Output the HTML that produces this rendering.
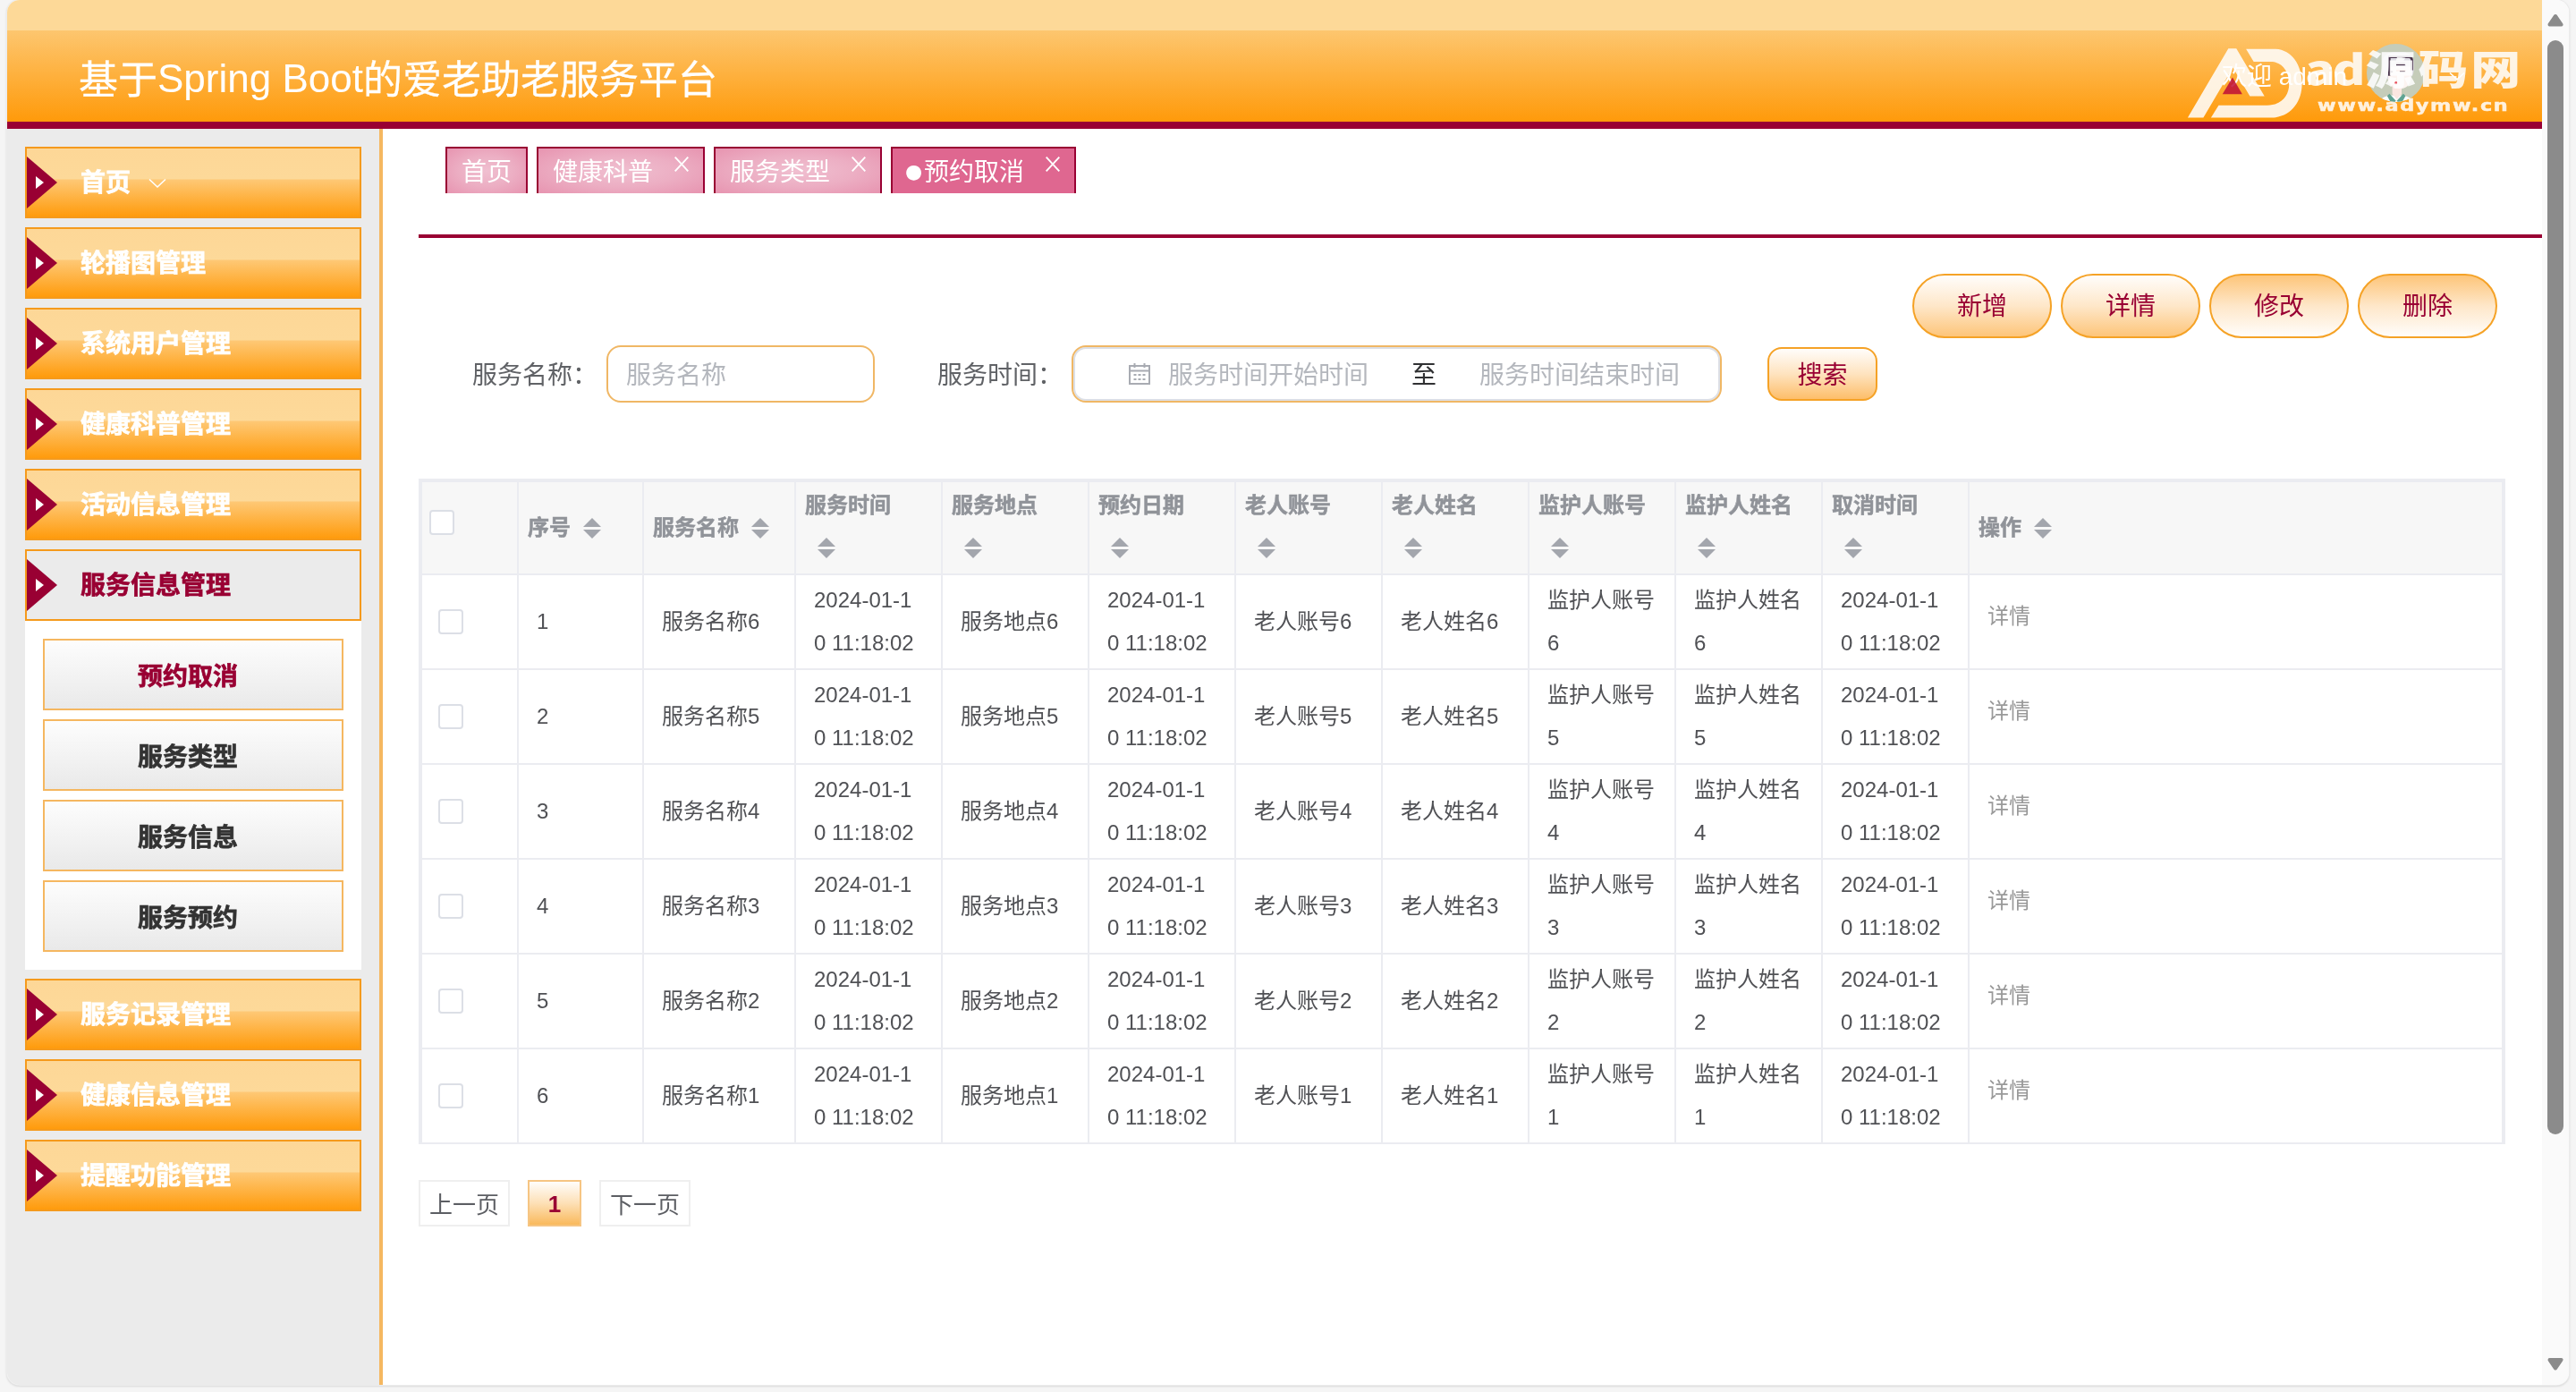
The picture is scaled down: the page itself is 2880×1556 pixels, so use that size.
<!DOCTYPE html>
<html lang="zh-CN">
<head>
<meta charset="utf-8">
<title>基于Spring Boot的爱老助老服务平台</title>
<style>
*{box-sizing:border-box;margin:0;padding:0}
html,body{width:2880px;height:1556px;overflow:hidden;background:#f5f5f5}
body{font-family:"Liberation Sans","Noto Sans CJK SC",sans-serif;color:#333;position:relative}
#win{will-change:transform;position:absolute;left:8px;top:0;width:2864px;height:1548px;border-radius:14px;overflow:hidden;background:#fff;box-shadow:0 0 0 1px #ececec,0 1px 2px 0.5px #dadada}
.abs{position:absolute}
/* header */
#hdr{position:absolute;left:0;top:0;width:2834px;height:136px;background:linear-gradient(to bottom,#fdd998 0,#fdd998 34px,#fdc66f 34px,#ff9a0a 136px)}
#hdrline{position:absolute;left:0;top:136px;width:2834px;height:8px;background:#990033}
#title{position:absolute;left:80px;top:56px;font-size:44px;line-height:64px;color:#fff;white-space:nowrap}
#title .cj{position:relative;top:2px;-webkit-text-stroke:0.3px #fff}
#welcome{position:absolute;left:2476px;top:66px;font-size:28px;line-height:40px;color:#fff;white-space:nowrap}
/* sidebar */
#side{position:absolute;left:0;top:144px;width:420px;height:1404px;background:#ebebeb;border-right:4px solid #f5b760}
.mi{position:absolute;left:20px;width:376px;height:80px;border:2px solid #f59a1c;background:linear-gradient(to bottom,#fdd797 0,#fdd999 34px,#fec875 35px,#ff9b0c 76px)}
.mi .tri{position:absolute;left:0;top:9px;width:0;height:0;border-left:34px solid #990033;border-top:29px solid transparent;border-bottom:29px solid transparent}
.mi .tri2{position:absolute;left:10px;top:31px;width:0;height:0;border-left:9px solid #fff;border-top:7px solid transparent;border-bottom:7px solid transparent}
.mi .t{-webkit-text-stroke:0.7px currentColor;position:absolute;left:60px;top:19px;font-size:28px;line-height:40px;font-weight:bold;color:#fff;white-space:nowrap}
.mi.act{background:#ebebeb}
.mi.act .t{color:#990033}
#sub{position:absolute;left:20px;top:550px;width:376px;height:390px;background:#fff}
.si{-webkit-text-stroke:0.7px currentColor;position:absolute;left:20px;width:336px;height:80px;border:2px solid #f5b760;background:linear-gradient(to bottom,#fdfdfd,#e9e9e9);font-size:28px;font-weight:bold;line-height:82px;text-align:center;color:#333;padding-right:12px}
.si.act{color:#990033}

/* main */
.tab{position:absolute;top:164px;height:52px;border:2px solid #990033;border-bottom:none;background:radial-gradient(ellipse at center,#f0bfd0 0%,#ecaec3 50%,#e794b0 100%);color:#fff;font-size:28px;line-height:54px;padding-left:16px;white-space:nowrap}
.tab.on{background:#df6790}
.tab svg{position:absolute;right:16px;top:9px}
.tab .dot{display:inline-block;width:19px;height:17px;position:relative;vertical-align:baseline}
.tab .dot b{position:absolute;left:-2px;top:-7.5px;font-weight:normal;font-size:22px;line-height:28px;font-family:"DejaVu Sans","Liberation Sans",sans-serif}
#rule{position:absolute;left:460px;top:262px;width:2374px;height:4px;background:#990033}
.btn{position:absolute;top:306px;width:156px;height:72px;border:2px solid #f5a226;border-radius:36px;font-size:28px;line-height:70px;text-align:center;color:#990033}
.btn.a{background:linear-gradient(to bottom,#fffdfb 0,#fee7c9 50%,#fdc57a 100%)}
.btn.b{background:linear-gradient(to bottom,#fdc57a 0,#fee7c9 50%,#fffdfb 100%)}
.lbl{position:absolute;top:386px;font-size:28px;line-height:67px;color:#606266;white-space:nowrap}
.inp{position:absolute;top:386px;height:64px;border:2px solid #f0b765;border-radius:16px;background:#fff;font-size:28px;line-height:63px;color:#b4b7bd;white-space:nowrap}
#sbtn{position:absolute;left:1968px;top:388px;width:123px;height:60px;border:2px solid #f5a226;border-radius:16px;background:linear-gradient(to bottom,#fffdfb 0,#fee3bf 50%,#fdbe6a 100%);font-size:28px;line-height:59px;text-align:center;color:#990033}
/* table */
#tb{position:absolute;left:460px;top:535px;width:2333px;height:744px;background:#ebecf1}
#tb table{position:absolute;left:4px;top:4px;border-collapse:separate;border-spacing:0;table-layout:fixed;width:2325px;font-size:24px;line-height:46px}
#tb th,#tb td{border-right:2px solid #ebecf1;border-bottom:2px solid #ebecf1;vertical-align:middle;text-align:left;overflow:hidden}
#tb th{-webkit-text-stroke:0.5px currentColor;background:#f7f7f7;color:#909399;font-weight:bold;height:104px;padding:0 0 0 10px}
#tb td{background:#fff;color:#505155;height:106px;padding:0 0 0 20px}
#tb td.ml{line-height:48px}
#tb th:last-child,#tb td:last-child{border-right:none}
.ck{position:relative;top:-2px;display:inline-block;width:28px;height:28px;border:2px solid #dcdfe6;border-radius:4px;background:#fff;vertical-align:middle}
.car{display:inline-block;width:20px;height:24px;position:relative;vertical-align:middle;margin-left:14px;top:-1px}
.car:before,.car:after{content:"";position:absolute;left:0;border-left:10px solid transparent;border-right:10px solid transparent}
.car:before{top:0;border-bottom:10px solid #a3a6ad}
.car:after{top:13px;border-top:10px solid #a3a6ad}
th .h2{position:relative;top:-2px}
th .car.nl{display:block;margin:11px 0 11px 14px;top:0}
.op{color:#999;position:relative;top:-6px}
/* pagination */
.pg{position:absolute;top:1319px;height:52px;border:2px solid #efefef;background:#fff;font-size:26px;line-height:53px;text-align:center;color:#5c5e63}
.pg.on{border-color:#f6c583;background:linear-gradient(to bottom,#fffdfb 0,#fde0b6 50%,#f9b95c 100%);color:#990033;font-weight:bold;line-height:50px}
/* scrollbar */
#sb{position:absolute;left:2834px;top:0;width:30px;height:1548px;background:#fafafa}
#sb .th{position:absolute;left:6px;top:45px;width:18px;height:1223px;border-radius:9px;background:#8b8b8b}
</style>
</head>
<body>
<div id="win">
<div id="hdr"></div>
<div id="hdrline"></div>
<div id="title"><span class="cj">基于</span>Spring Boot<span class="cj">的爱老助老服务平台</span></div>
<div id="side">
<div class="mi" style="top:20px"><i class="tri"></i><i class="tri2"></i><span class="t">首页</span><svg class="abs" style="left:136px;top:33px" width="20" height="12" viewBox="0 0 20 12"><path d="M1 1.5 L10 10 L19 1.5" fill="none" stroke="#fff" stroke-width="1.6"/></svg></div>
<div class="mi" style="top:110px"><i class="tri"></i><i class="tri2"></i><span class="t">轮播图管理</span></div>
<div class="mi" style="top:200px"><i class="tri"></i><i class="tri2"></i><span class="t">系统用户管理</span></div>
<div class="mi" style="top:290px"><i class="tri"></i><i class="tri2"></i><span class="t">健康科普管理</span></div>
<div class="mi" style="top:380px"><i class="tri"></i><i class="tri2"></i><span class="t">活动信息管理</span></div>
<div class="mi act" style="top:470px"><i class="tri"></i><i class="tri2"></i><span class="t">服务信息管理</span></div>
<div id="sub">
<div class="si act" style="top:20px">预约取消</div>
<div class="si" style="top:110px">服务类型</div>
<div class="si" style="top:200px">服务信息</div>
<div class="si" style="top:290px">服务预约</div>
</div>
<div class="mi" style="top:950px"><i class="tri"></i><i class="tri2"></i><span class="t">服务记录管理</span></div>
<div class="mi" style="top:1040px"><i class="tri"></i><i class="tri2"></i><span class="t">健康信息管理</span></div>
<div class="mi" style="top:1130px"><i class="tri"></i><i class="tri2"></i><span class="t">提醒功能管理</span></div>
</div>
<div class="tab" style="left:490px;width:92px">首页</div>
<div class="tab" style="left:592px;width:188px">健康科普<svg width="16" height="17" viewBox="0 0 16 17"><path d="M0.7 0.7 L15.3 16.3 M15.3 0.7 L0.7 16.3" stroke="#fff" stroke-width="1.9" fill="none"/></svg></div>
<div class="tab" style="left:790px;width:188px">服务类型<svg width="16" height="17" viewBox="0 0 16 17"><path d="M0.7 0.7 L15.3 16.3 M15.3 0.7 L0.7 16.3" stroke="#fff" stroke-width="1.9" fill="none"/></svg></div>
<div class="tab on" style="left:988px;width:207px"><span class="dot"><b>●</b></span>预约取消<svg width="16" height="17" viewBox="0 0 16 17"><path d="M0.7 0.7 L15.3 16.3 M15.3 0.7 L0.7 16.3" stroke="#fff" stroke-width="1.9" fill="none"/></svg></div>
<div id="rule"></div>
<div class="btn a" style="left:2130px">新增</div>
<div class="btn a" style="left:2296px">详情</div>
<div class="btn b" style="left:2462px">修改</div>
<div class="btn b" style="left:2628px">删除</div>
<div class="lbl" style="left:520px">服务名称：</div>
<div class="inp" style="left:670px;width:300px;padding-left:20px">服务名称</div>
<div class="lbl" style="left:1040px">服务时间：</div>
<div class="inp" style="left:1190px;width:727px;box-shadow:inset 0 0 0 2px #dcdfe6"><svg class="abs" style="left:61px;top:17px" width="26" height="26" viewBox="0 0 26 26" fill="none" stroke="#a8abb2" stroke-width="2"><rect x="2" y="4" width="22" height="20"/><path d="M2 9.5H24M7.5 1V6M18.5 1V6"/><path d="M6.5 14H9.5M11.5 14H14.5M16.5 14H19.5M6.5 19H9.5M11.5 19H14.5M16.5 19H19.5"/></svg><span class="abs" style="left:106px;top:0">服务时间开始时间</span><span class="abs" style="left:378px;top:0;color:#303133">至</span><span class="abs" style="left:454px;top:0">服务时间结束时间</span></div>
<div id="sbtn">搜索</div>
<div id="tb"><table><colgroup><col style="width:108px"><col style="width:140px"><col style="width:170px"><col style="width:164px"><col style="width:164px"><col style="width:164px"><col style="width:164px"><col style="width:164px"><col style="width:164px"><col style="width:164px"><col style="width:164px"><col style="width:595px"></colgroup>
<tr><th style="padding-left:8px"><i class="ck" style="top:-8px"></i></th><th>序号<i class="car"></i></th><th>服务名称<i class="car"></i></th><th><span class="h2">服务时间</span><i class="car nl"></i></th><th><span class="h2">服务地点</span><i class="car nl"></i></th><th><span class="h2">预约日期</span><i class="car nl"></i></th><th><span class="h2">老人账号</span><i class="car nl"></i></th><th><span class="h2">老人姓名</span><i class="car nl"></i></th><th><span class="h2">监护人账号</span><i class="car nl"></i></th><th><span class="h2">监护人姓名</span><i class="car nl"></i></th><th><span class="h2">取消时间</span><i class="car nl"></i></th><th>操作<i class="car"></i></th></tr>
<tr><td style="padding-left:18px"><i class="ck"></i></td><td>1</td><td>服务名称6</td><td class="ml">2024-01-1<br>0 11:18:02</td><td>服务地点6</td><td class="ml">2024-01-1<br>0 11:18:02</td><td>老人账号6</td><td>老人姓名6</td><td class="ml">监护人账号<br>6</td><td class="ml">监护人姓名<br>6</td><td class="ml">2024-01-1<br>0 11:18:02</td><td><span class="op">详情</span></td></tr>
<tr><td style="padding-left:18px"><i class="ck"></i></td><td>2</td><td>服务名称5</td><td class="ml">2024-01-1<br>0 11:18:02</td><td>服务地点5</td><td class="ml">2024-01-1<br>0 11:18:02</td><td>老人账号5</td><td>老人姓名5</td><td class="ml">监护人账号<br>5</td><td class="ml">监护人姓名<br>5</td><td class="ml">2024-01-1<br>0 11:18:02</td><td><span class="op">详情</span></td></tr>
<tr><td style="padding-left:18px"><i class="ck"></i></td><td>3</td><td>服务名称4</td><td class="ml">2024-01-1<br>0 11:18:02</td><td>服务地点4</td><td class="ml">2024-01-1<br>0 11:18:02</td><td>老人账号4</td><td>老人姓名4</td><td class="ml">监护人账号<br>4</td><td class="ml">监护人姓名<br>4</td><td class="ml">2024-01-1<br>0 11:18:02</td><td><span class="op">详情</span></td></tr>
<tr><td style="padding-left:18px"><i class="ck"></i></td><td>4</td><td>服务名称3</td><td class="ml">2024-01-1<br>0 11:18:02</td><td>服务地点3</td><td class="ml">2024-01-1<br>0 11:18:02</td><td>老人账号3</td><td>老人姓名3</td><td class="ml">监护人账号<br>3</td><td class="ml">监护人姓名<br>3</td><td class="ml">2024-01-1<br>0 11:18:02</td><td><span class="op">详情</span></td></tr>
<tr><td style="padding-left:18px"><i class="ck"></i></td><td>5</td><td>服务名称2</td><td class="ml">2024-01-1<br>0 11:18:02</td><td>服务地点2</td><td class="ml">2024-01-1<br>0 11:18:02</td><td>老人账号2</td><td>老人姓名2</td><td class="ml">监护人账号<br>2</td><td class="ml">监护人姓名<br>2</td><td class="ml">2024-01-1<br>0 11:18:02</td><td><span class="op">详情</span></td></tr>
<tr><td style="padding-left:18px"><i class="ck"></i></td><td>6</td><td>服务名称1</td><td class="ml">2024-01-1<br>0 11:18:02</td><td>服务地点1</td><td class="ml">2024-01-1<br>0 11:18:02</td><td>老人账号1</td><td>老人姓名1</td><td class="ml">监护人账号<br>1</td><td class="ml">监护人姓名<br>1</td><td class="ml">2024-01-1<br>0 11:18:02</td><td><span class="op">详情</span></td></tr>
</table></div>
<div class="pg" style="left:460px;width:102px">上一页</div>
<div class="pg on" style="left:582px;width:60px">1</div>
<div class="pg" style="left:662px;width:102px">下一页</div>
<div id="sb"><svg class="abs" style="left:6px;top:15px" width="18" height="15" viewBox="0 0 18 15"><path d="M9 3 L15.5 12.5 H2.5 Z" fill="#8b8b8b" stroke="#8b8b8b" stroke-width="4" stroke-linejoin="round"/></svg><div class="th"></div><svg class="abs" style="left:6px;top:1517px" width="18" height="15" viewBox="0 0 18 15"><path d="M9 12.5 L15.5 3 H2.5 Z" fill="#8b8b8b" stroke="#8b8b8b" stroke-width="4" stroke-linejoin="round"/></svg></div>
<div id="welcome">欢迎 admin</div>
<svg class="abs" style="left:2638px;top:48.500px" width="65" height="65" viewBox="0 0 65 65"><defs><clipPath id="avc"><circle cx="32.5" cy="32.5" r="32.5"/></clipPath></defs><g clip-path="url(#avc)"><rect width="65" height="65" fill="#c5ccb9"/><path d="M14 70 C14 60 20 57.500 33 57.500 C46 57.500 52 60 52 70Z" fill="#fcfcfd"/><path d="M28.600 48h10.400v8l-5.200 6l-5.200-6z" fill="#fbe6e0"/><path d="M25.400 55.800l7.300 8l-4.500 4l-5.300-9.500z M40.900 55.800l-7.300 8l4.500 4l5.300-9.500z" fill="#5fa392"/><rect x="17.600" y="9.200" width="35" height="32" rx="12" fill="#dddce4"/><path d="M24 25.400h25.300v13c0 7-5.500 12-12.600 12s-12.700-5-12.700-12z" fill="#fdf4f1"/><path d="M24 13.400h24.600c2.500 1 3.300 3 3.300 5v11h-2.600v-11c0-1.300-.6-2.400-2-2.400h-20.700v19.700h-2.600z" fill="#47324a"/><rect x="33" y="21.500" width="9.800" height="2.600" fill="#47324a"/><rect x="24" y="30.500" width="5.200" height="1.400" fill="#47324a"/><rect x="37" y="30.500" width="5.800" height="1.400" fill="#47324a"/><ellipse cx="32.800" cy="43.800" rx="1.600" ry="1.800" fill="#e8525f"/></g></svg>
<svg class="abs" style="left:2729.500px;top:80px" width="18" height="10" viewBox="0 0 18 10"><path d="M1 1.500 L9 8.800 L17 1.500" fill="none" stroke="#fff" stroke-width="1.6"/></svg>
<div id="wm" class="abs" style="left:0;top:0;width:2834px;height:144px;opacity:.86;pointer-events:none">
<svg class="abs" style="left:2422px;top:40px" width="200" height="100" viewBox="0 0 2576 1288"><path d="M205 1180 L790 185 L905 185 L1310 870 L1100 870 L855 456 L430 1180 Z" fill="#fff"/><path d="M1045 190 L1450 190 C1700 190 1850 420 1850 690 C1850 960 1680 1180 1400 1180 L540 1180 L650 1000 L1350 1000 C1550 1000 1665 870 1665 690 C1665 510 1560 375 1400 375 L1155 375 Z" fill="#fff"/><path d="M705 840 L990 840 L850 600 Z" fill="#bf0f37"/></svg>
<div class="abs" id="wm1" style="left:2568.5px;top:43px;font-family:'Noto Sans CJK SC','Liberation Sans',sans-serif;font-weight:900;font-size:45px;line-height:66px;color:#fff;white-space:nowrap;transform-origin:0 50%;transform:scaleX(1.243)"><span style="letter-spacing:-2.5px">ad</span><span style="letter-spacing:2.3px;margin-left:2.5px">源码网</span></div>
<div class="abs" id="wm2" style="left:2583px;top:103.5px;font-family:'DejaVu Sans','Liberation Sans',sans-serif;font-weight:bold;font-size:18px;line-height:28px;color:#fff;white-space:nowrap;letter-spacing:1.33px;transform-origin:0 50%;transform:scaleX(1.24);-webkit-text-stroke:0.5px #fff">www.adymw.cn</div>
</div>
</div>
</body>
</html>
